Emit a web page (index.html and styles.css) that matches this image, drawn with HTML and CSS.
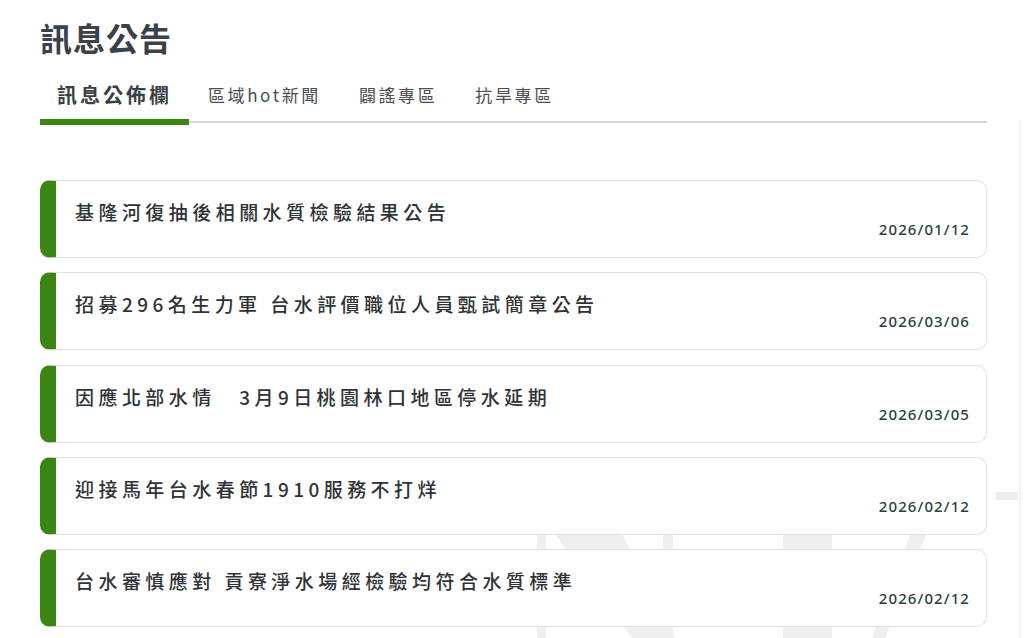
FILE: index.html
```html
<!DOCTYPE html>
<html lang="zh-Hant">
<head>
<meta charset="utf-8">
<title>訊息公告</title>
<link rel="stylesheet" href="styles.css">
</head>
<body>
<svg class="watermark" width="1024" height="638" viewBox="0 0 1024 638" aria-hidden="true">
  <g fill="#efefef">
    <rect x="537" y="530" width="9" height="108"/>
    <polygon points="552,530 620,530 675,638 632,638"/>
    <rect x="663" y="530" width="10" height="108"/>
    <rect x="783" y="530" width="49" height="108"/>
    <polygon points="912,530 928,530 885,638 872,638"/>
    <rect x="996" y="492" width="22" height="8"/>
    <rect x="1019" y="120" width="2" height="518" fill="#f3f3f3"/>
  </g>
</svg>
<main class="page">
  <h1 class="title">訊息公告</h1>
  <nav class="tabs">
    <a class="tab active">訊息公佈欄</a>
    <a class="tab">區域hot新聞</a>
    <a class="tab">闢謠專區</a>
    <a class="tab">抗旱專區</a>
  </nav>
  <ul class="news">
    <li class="card">
      <p class="card-title">基隆河復抽後相關水質檢驗結果公告</p>
      <span class="card-date">2026/01/12</span>
    </li>
    <li class="card">
      <p class="card-title">招募296名生力軍 台水評價職位人員甄試簡章公告</p>
      <span class="card-date">2026/03/06</span>
    </li>
    <li class="card">
      <p class="card-title">因應北部水情　3月9日桃園林口地區停水延期</p>
      <span class="card-date">2026/03/05</span>
    </li>
    <li class="card">
      <p class="card-title">迎接馬年台水春節1910服務不打烊</p>
      <span class="card-date">2026/02/12</span>
    </li>
    <li class="card">
      <p class="card-title">台水審慎應對 貢寮淨水場經檢驗均符合水質標準</p>
      <span class="card-date">2026/02/12</span>
    </li>
  </ul>
</main>
</body>
</html>
```

FILE: styles.css
```css
* { box-sizing: border-box; }
html, body {
  margin: 0;
  padding: 0;
  background: #ffffff;
  height: 638px;
  overflow: hidden;
}
body {
  font-family: "Noto Sans CJK TC", "Noto Sans", sans-serif;
  color: #333;
  position: relative;
}
.watermark {
  position: absolute;
  left: 0;
  top: 0;
  z-index: 0;
}
.page {
  position: relative;
  z-index: 1;
  padding: 0 37px 0 40px;
}
.title {
  margin: 0;
  padding-top: 17px;
  font-size: 32px;
  line-height: 40px;
  font-weight: 700;
  color: #3b4147;
  letter-spacing: 1px;
}
.tabs {
  display: flex;
  margin-top: 26px;
  border-bottom: 2px solid #d6d6d6;
  height: 40px;
  align-items: flex-start;
}
.tab {
  position: relative;
  padding: 0 19px;
  height: 38px;
  display: flex;
  align-items: flex-start;
  font-size: 17px;
  line-height: 24px;
  letter-spacing: 2.6px;
  color: #4a4f55;
  cursor: pointer;
}
.tab.active {
  padding: 0 17px;
  font-size: 20px;
  font-weight: 700;
  color: #3a3f44;
  letter-spacing: 3px;
  line-height: 24px;
}
.tab.active::after {
  content: "";
  position: absolute;
  left: 0;
  right: 0;
  bottom: -4px;
  height: 6px;
  background: #3b8612;
}
.news {
  list-style: none;
  margin: 57px 0 0;
  padding: 0;
  display: flex;
  flex-direction: column;
  gap: 14.3px;
}
.card {
  height: 78px;
  flex: none;
  border: 1px solid #e1e1e1;
  border-left: 16px solid #3b8612;
  border-radius: 10px;
  background: #ffffff;
  padding: 18px 16px 0 19px;
  display: flex;
  flex-direction: column;
}
.card-title {
  margin: 0;
  font-size: 19px;
  line-height: 26px;
  letter-spacing: 4.45px;
  color: #2f3336;
  font-weight: 500;
}
.card-date {
  align-self: flex-end;
  margin-top: -6px;
  font-family: "Noto Sans", "Open Sans", sans-serif;
  font-size: 15px;
  line-height: 20px;
  letter-spacing: 1.1px;
  color: #2a3f3f;
  font-weight: 500;
}
```
